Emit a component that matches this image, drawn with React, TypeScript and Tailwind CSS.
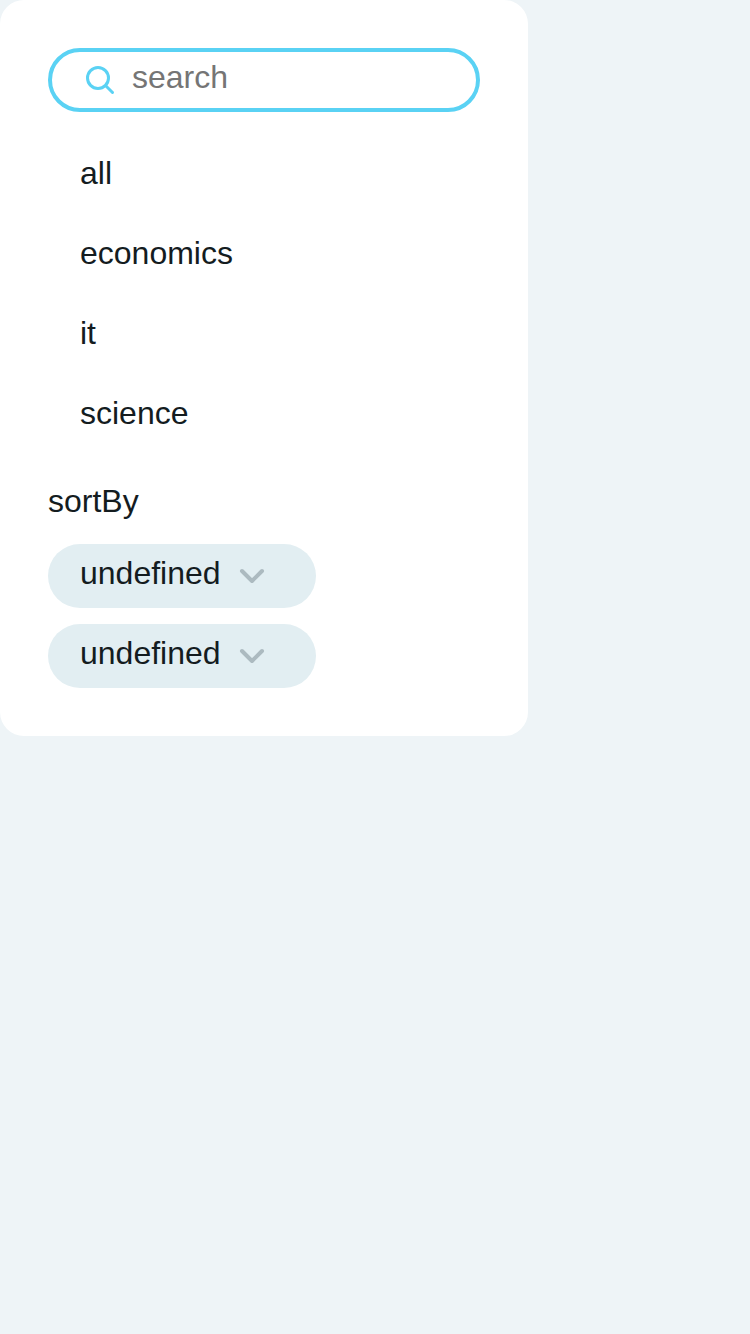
const categories = ["all", "economics", "it", "science"];

function SortButton() {
  return (
    <button className="flex h-16 w-[268px] items-center rounded-full bg-[#e2eef2] pl-8 text-[#141c1f]">
      <span className="mb-1.5 w-[140px] whitespace-nowrap text-left text-[32px] leading-10">undefined</span>
      <svg className="ml-4 h-8 w-8" viewBox="0 0 32 32" fill="none" stroke="#acbac0" strokeWidth="4" strokeLinecap="round" strokeLinejoin="round">
        <path d="M6 11l10 10 10-10" />
      </svg>
    </button>
  );
}

export default function App() {
  return (
    <main className="min-h-screen bg-[#eef4f7] font-['Liberation_Sans',sans-serif] text-[32px] leading-10 text-[#141c1f]">
      <section className="flex h-[736px] w-[528px] flex-col items-start rounded-3xl bg-white p-12">
        <label className="flex h-16 w-full items-center rounded-full border-4 border-[#5ad2f4] pl-8">
          <svg className="h-8 w-8 shrink-0" viewBox="0 0 32 32" fill="none" stroke="#5ad2f4" strokeWidth="3" strokeLinecap="round">
            <circle cx="14" cy="14" r="10.5" />
            <path d="M22 22l6.5 6.5" />
          </svg>
          <input className="mb-1.5 ml-4 h-10 w-72 bg-transparent outline-none placeholder:text-[#757575]" placeholder="search" />
        </label>
        <nav className="mt-8 flex flex-col gap-4 pl-8">
          {categories.map((name) => (
            <a key={name} className="flex h-16 items-center pb-1.5">{name}</a>
          ))}
        </nav>
        <h2 className="mt-[33px] h-10">sortBy</h2>
        <div className="mt-[23px] flex flex-col gap-4">
          <SortButton />
          <SortButton />
        </div>
      </section>
    </main>
  );
}
